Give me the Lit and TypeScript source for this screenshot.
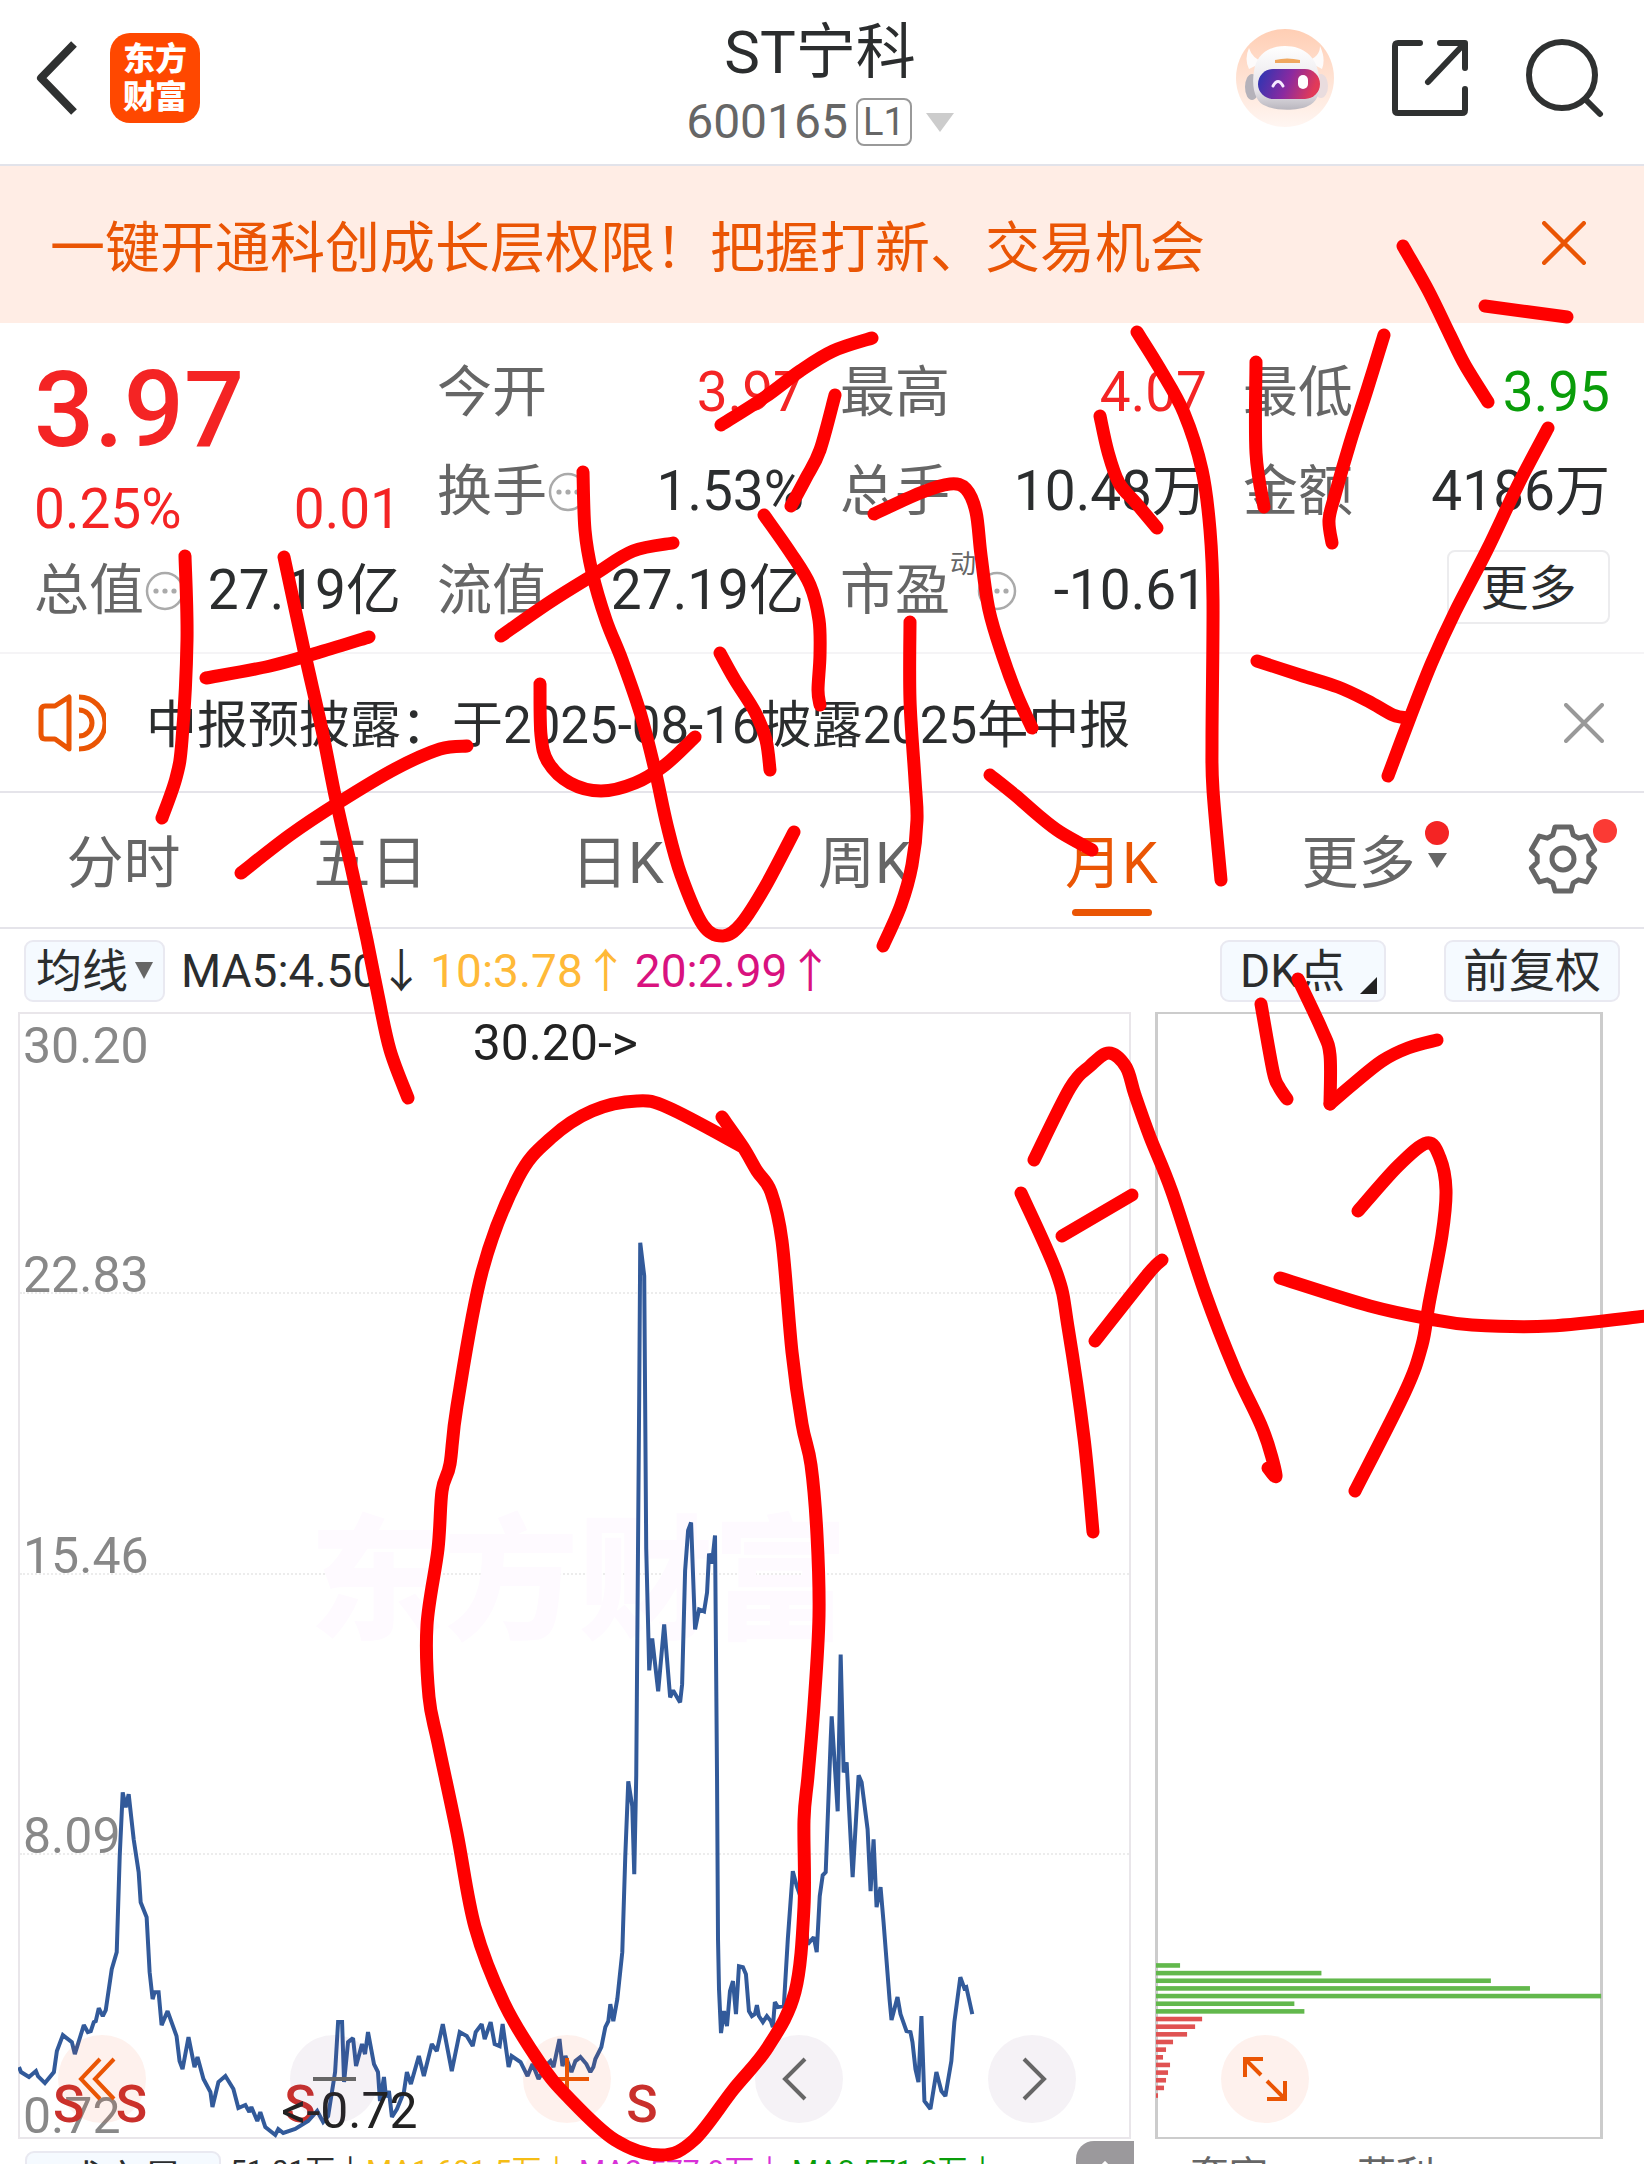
import { LitElement, html, svg, css, nothing } from "lit";
import { customElement, state } from "lit/decorators.js";
import { classMap } from "lit/directives/class-map.js";

type Point = [number, number];

/** Turns a flat "x,y x,y" list into points. */
const parse = (s: string): Point[] =>
  s.trim().split(/\s+/).map((p) => p.split(",").map(Number) as Point);

/** Smooth curve through every point (Catmull-Rom as cubic Béziers). */
const smooth = (s: string): string => {
  const p = parse(s);
  let d = `M${p[0][0]},${p[0][1]}`;
  for (let i = 0; i < p.length - 1; i++) {
    const a = p[i - 1] ?? p[i];
    const b = p[i];
    const c = p[i + 1];
    const e = p[i + 2] ?? c;
    d += `C${b[0] + (c[0] - a[0]) / 6},${b[1] + (c[1] - a[1]) / 6} ${c[0] - (e[0] - b[0]) / 6},${c[1] - (e[1] - b[1]) / 6} ${c[0]},${c[1]}`;
  }
  return d;
};

/** Outline of a six-toothed gear centred on the origin. */
const gearPath = (outer: number, inner: number): string => {
  const pts: string[] = [];
  for (let k = 0; k < 6; k++) {
    for (const [off, r] of [[-23, inner], [-14, outer], [14, outer], [23, inner]]) {
      const t = ((k * 60 + off - 90) * Math.PI) / 180;
      pts.push(`${(r * Math.cos(t)).toFixed(1)},${(r * Math.sin(t)).toFixed(1)}`);
    }
  }
  return `M${pts.join("L")}Z`;
};

const PRICE_LINE = `
19,2068 21,2073 29,2078 36,2072 38,2077 45,2084 54,2073 57,2052 63,2036 72,2043 75,2055 84,2026 88,2033 91,2032
94,2023 96,2022 99,2009 103,2017 106,2011 112,1970 117,1953 120,1857 123,1793 126,1808 129,1795 134,1840 139,1873
141,1903 147,1918 150,1973 153,2000 155,1993 159,1993 162,2026 168,2012 177,2037 180,2062 183,2070 189,2038
195,2068 198,2058 204,2080 211,2093 213,2108 219,2083 226,2077 234,2090 239,2109 246,2106 250,2113 252,2108
258,2122 261,2113 266,2128 276,2136 279,2130 284,2134 296,2130 309,2122 318,2112 324,2123 329,2117 336,2073
339,2023 343,2023 345,2083 349,2043 354,2039 357,2067 363,2045 366,2055 369,2033 375,2065 379,2073 381,2102
385,2078 387,2098 390,2092 393,2118 398,2110 405,2093 408,2073 412,2085 420,2057 425,2077 433,2045 438,2052
444,2025 453,2072 461,2033 468,2037 474,2047 477,2033 483,2025 486,2040 492,2023 496,2045 501,2047 504,2025
510,2068 513,2057 522,2063 529,2077 534,2065 540,2080 549,2065 552,2062 555,2068 561,2040 564,2067 567,2057
573,2073 577,2062 582,2058 588,2065 592,2073 595,2068 597,2060 603,2048 607,2028 610,2022 612,2005 615,2022
619,2000 624,1953 627,1857 630,1782 634,1807 636,1875 638,1776 641,1392 642,1243 646,1276 648,1549 651,1671
654,1639 660,1692 666,1625 672,1698 675,1691 682,1703 684,1685 687,1571 690,1531 693,1523 697,1630 701,1610
706,1612 709,1593 711,1554 714,1564 717,1536 719,1776 720,1940 721,1990 723,2034 726,2012 729,2027 732,1992
735,1982 738,2015 741,1967 745,1968 748,1975 751,2012 754,2017 757,2015 759,2006 761,2017 765,2023 769,2017
773,2022 775,2028 777,2003 780,2008 786,2007 790,1940 795,1872 799,1887 806,1907 810,1945 816,1938 819,1953
822,1897 825,1876 828,1873 833,1740 834,1717 840,1812 843,1655 846,1773 849,1763 855,1878 861,1776 864,1783
870,1830 873,1892 876,1840 879,1908 883,1888 886,1923 892,2000 894,2021 900,1998 903,2015 909,2032 913,2033
915,2043 918,2070 921,2083 924,2017 927,2102 933,2110 939,2073 944,2092 948,2097 954,2062 957,2023 963,1978
967,1989 969,1988 975,2015`;

const INK = [
  "185,556 187,640 182,740 176,778 162,818",
  "206,678 270,666 320,652 369,637",
  "241,873 290,835 338,803 395,769 440,749 467,746",
  "284,557 304,650 322,730 336,800 353,875 367,940 378,995 390,1050 408,1098",
  "583,472 585,530 592,572 606,620 622,660 640,712 655,770 667,825 681,875 703,925 723,936 741,924 765,887 794,832",
  "501,636 550,602 595,574 633,551 673,543",
  "540,684 541,735 548,762 570,783 601,791 635,783 665,765 695,737",
  "720,653 735,680 755,712 766,740 770,770",
  "721,425 765,397 800,371 833,351 872,338",
  "835,395 820,450 806,478 791,506",
  "764,515 790,552 810,585 819,620 820,655 818,690 820,705",
  "874,514 920,493 950,484 966,489 976,512 981,555 989,610 1003,657 1017,695 1032,728",
  "910,622 910,700 915,780 917,820 912,865 901,905 883,946",
  "990,775 1015,795 1038,815 1060,832 1092,850",
  "1100,416 1108,452 1119,483 1136,503 1157,528",
  "1137,332 1160,369 1184,413 1202,470 1210,530 1213,600 1212,740 1213,790 1221,880",
  "1256,362 1256,453 1264,507",
  "1384,335 1367,390 1350,443 1335,495 1329,520 1332,543",
  "1403,246 1428,290 1450,335 1465,365 1488,402",
  "1485,306 1567,317",
  "1548,428 1518,485 1487,550 1455,612 1432,662 1411,715 1388,776",
  "1257,661 1300,675 1338,687 1368,701 1393,715 1409,718",
  "1034,1160 1070,1088 1090,1066 1109,1053 1126,1067 1135,1095 1150,1137 1172,1192 1205,1293 1235,1370 1263,1430 1276,1475 1268,1468",
  "1021,1193 1057,1274 1068,1327 1084,1438 1093,1532",
  "1062,1236 1132,1195",
  "1095,1341 1148,1274 1162,1260",
  "1261,1004 1273,1071 1279,1087 1287,1099",
  "1298,979 1322,1030 1330,1055 1330,1104",
  "1330,1104 1352,1085 1382,1061 1408,1048 1437,1040",
  "1358,1211 1398,1166 1427,1143 1440,1158 1446,1190 1442,1235 1429,1304 1422,1345 1405,1392 1355,1491",
  "1280,1278 1370,1306 1430,1319 1472,1325 1550,1326 1646,1316",
  "722,1117 743,1147 757,1171 771,1192 782,1241 792,1352 802,1424 811,1465 817,1535 819,1616 814,1705 808,1776 804,1820 804,1907 795,1992 768,2047 733,2090 694,2140 661,2155 615,2140 568,2097 540,2063 504,2003 475,1927 457,1833 438,1743 429,1697 427,1625 438,1549 442,1491 450,1464 457,1406 482,1272 518,1178 551,1138 592,1111 637,1101 669,1108 743,1147",
];

const BARS: { length: number; tone: "down" | "up" }[] = [
  ...[24, 165, 334, 373, 444, 138, 148].map((length) => ({ length, tone: "down" as const })),
  ...[46, 39, 31, 17, 10, 7, 14, 12, 10, 8, 2].map((length) => ({ length, tone: "up" as const })),
];

const PERIODS = ["分时", "五日", "日K", "周K", "月K"];

@customElement("app-root")
export class AppRoot extends LitElement {
  @state() private period = "月K";

  static styles = css`
    :host {
      display: block;
      font-family: Roboto, "Noto Sans CJK SC", sans-serif;
      color: #2b2d2e;
      background: #fff;
    }
    * { box-sizing: border-box; }
    button {
      font: inherit;
      color: inherit;
      background: none;
      border: 0;
      padding: 0;
      margin: 0;
      display: flex;
      align-items: center;
      justify-content: center;
      cursor: pointer;
    }
    svg { display: block; flex: none; }
    h1, p, dl, dd, dt { margin: 0; font-weight: 400; }
    .screen {
      position: relative;
      display: flex;
      flex-direction: column;
      height: 100vh;
      overflow: hidden;
      white-space: nowrap;
    }

    .header {
      display: grid;
      grid-template-columns: 1fr auto 1fr;
      align-items: center;
      flex: none;
      height: 166px;
      padding: 0 40px 8px 36px;
      border-bottom: 2px solid #e2e3ea;
    }
    .lead, .actions { display: flex; align-items: center; }
    .lead { gap: 32px; }
    .actions { gap: 58px; justify-content: flex-end; }
    .logo {
      width: 90px;
      height: 90px;
      border-radius: 20px;
      background: #ff4800;
      color: #fff;
      font-size: 32px;
      line-height: 38px;
      font-weight: 900;
      flex-direction: column;
    }
    .title { align-self: end; text-align: center; }
    .name { font-size: 60px; line-height: 70px; }
    .code {
      display: flex;
      align-items: center;
      justify-content: center;
      gap: 8px;
      font-size: 48px;
      line-height: 68px;
      color: #666;
    }
    .level {
      border: 2px solid #999;
      border-radius: 8px;
      font-size: 38px;
      line-height: 44px;
      padding: 0 5px;
    }
    .code svg { margin-left: 6px; }

    .banner {
      display: flex;
      align-items: center;
      justify-content: space-between;
      flex: none;
      height: 157px;
      padding: 0 58px 4px 50px;
      background: #ffede5;
      color: #ea5504;
      font-size: 55px;
    }

    .quote {
      display: grid;
      grid-template-columns: repeat(4, 1fr);
      grid-auto-rows: 99px;
      column-gap: 36px;
      flex: none;
      padding: 20px 34px 12px;
      border-bottom: 2px solid #f5f4f6;
      font-size: 55px;
    }
    .last { grid-row: span 2; color: #f42424; }
    .price { font-size: 106px; font-weight: 500; line-height: 134px; }
    .change { display: flex; justify-content: space-between; line-height: 64px; }
    .item { display: flex; justify-content: space-between; align-items: center; line-height: 99px; }
    .item dt { color: #666; display: flex; align-items: center; }
    .item dt svg { margin-left: 1px; }
    .item sup { font-size: 26px; line-height: 26px; align-self: flex-start; margin-top: 10px; }
    .up { color: #f42424; }
    .down { color: #0a9d0a; }
    .more {
      justify-self: end;
      align-self: center;
      width: 163px;
      height: 74px;
      margin-bottom: 8px;
      padding-bottom: 6px;
      border: 2px solid #ececee;
      border-radius: 8px;
      font-size: 48px;
    }

    .notice {
      display: flex;
      align-items: center;
      flex: none;
      height: 139px;
      padding: 0 40px 0 38px;
      border-bottom: 2px solid #e5e4ea;
      font-size: 51px;
    }
    .notice p { flex: 1; padding: 0 0 4px 40px; }

    .tabs {
      display: grid;
      grid-template-columns: repeat(6, 247fr) 162fr;
      flex: none;
      height: 136px;
      border-bottom: 2px solid #e5e4ea;
      font-size: 57px;
      color: #666;
    }
    .tab { position: relative; padding-bottom: 4px; }
    .tab.active { color: #ea5504; }
    .tab.active::after {
      content: "";
      position: absolute;
      bottom: 11px;
      left: 50%;
      width: 80px;
      margin-left: -40px;
      height: 7px;
      border-radius: 4px;
      background: #ea5504;
    }
    .badge { position: absolute; top: 26px; left: 50%; margin-left: 66px; }

    .tools {
      display: flex;
      align-items: center;
      flex: none;
      height: 83px;
      padding: 0 24px;
      font-size: 46px;
      line-height: 58px;
    }
    .chip {
      height: 62px;
      border: 2px solid #e9e9f1;
      border-radius: 9px;
      background: #f5faff;
      padding: 0 17px;
      flex: none;
    }
    .pick { gap: 7px; padding: 0 10px; }
    .averages { display: flex; gap: 6px; flex: 1; padding-left: 16px; }
    .ma10 { color: #ffb938; }
    .ma20 { color: #d9127f; }
    .dk { margin-right: 58px; padding: 0 7px 0 18px; gap: 15px; }
    .dk svg { align-self: flex-end; margin-bottom: 6px; }

    .charts {
      position: relative;
      display: flex;
      flex: 1;
      min-height: 0;
      gap: 24px;
      padding: 0 41px 0 18px;
    }
    .main { position: relative; flex: 1116; border: 2px solid #e9e6ea; display: flex; flex-direction: column; }
    .side { flex: 445; border: 3px solid #ccc; border-top-width: 2px; border-bottom-width: 2px; position: relative; }
    .band {
      flex: 1;
      display: flex;
      flex-direction: column;
      justify-content: space-between;
      border-bottom: 2px dotted #ececec;
      padding-left: 3px;
      font-size: 50px;
      line-height: 34px;
      color: #888;
    }
    .band:last-of-type { border-bottom: 0; padding-bottom: 4px; }
    .band:first-of-type span:first-child { line-height: 66px; margin-bottom: auto; margin-top: -1px; }
    .band span:only-child { margin-top: auto; }
    .plot, .profile, .ink { position: absolute; pointer-events: none; }
    .plot, .profile { inset: -2px; width: calc(100% + 4px); height: calc(100% + 4px); }
    .profile { left: -3px; right: -3px; width: calc(100% + 6px); }
    .ink { inset: 0; width: 100%; height: 100%; }
    .mark { font-size: 52px; font-weight: 500; fill: #c9302c; }
    .peak { font-size: 50px; fill: #222; }
    .watermark { font-size: 135px; font-weight: 900; fill: #fefaff; }

    .floating {
      position: absolute;
      left: 3.5%;
      right: 20.4%;
      bottom: 16px;
      display: flex;
      justify-content: space-between;
    }
    .round { width: 88px; height: 88px; border-radius: 50%; background: rgba(240, 80, 30, 0.08); }
    .round.plain { background: rgba(110, 70, 130, 0.07); }

    .volume {
      display: flex;
      flex: none;
      height: 25px;
      padding: 0 0 0 25px;
      align-items: flex-start;
      overflow: hidden;
      font-size: 30px;
      line-height: 42px;
    }
    .volume .chip { width: 196px; height: 60px; margin-top: 12px; font-size: 40px; line-height: 48px; }
    .volume span { margin-top: 11px; width: 213px; flex: none; }
    .volume .now { width: 145px; padding-left: 9px; }
    .v1 { color: #f5bd15; }
    .v2 { color: #d830d8; }
    .v3 { color: #0a9d0a; }
    .corner { width: 58px; height: 60px; margin-top: 2px; margin-left: 71px; border-radius: 18px 0 0 0; background: #9b999c; flex: none; align-items: flex-start; }
    .corner svg { margin-top: 20px; }
    .volume .legend { font-size: 39px; line-height: 50px; color: #666; width: 167px; margin-top: 12px; }
    .volume .legend.first { margin-left: 56px; }
  `;

  private cross(size: number, width: number, color: string) {
    return html`<svg width=${size} height=${size} viewBox="0 0 40 40" aria-hidden="true">
      <path d="M2 2L38 38M38 2L2 38" fill="none" stroke=${color} stroke-width=${width} stroke-linecap="round" />
    </svg>`;
  }

  private caret(width: number, height: number, color: string) {
    return html`<svg width=${width} height=${height} viewBox="0 0 20 16" preserveAspectRatio="none" aria-hidden="true">
      <path d="M0 0H20L10 16Z" fill=${color} />
    </svg>`;
  }

  private hint() {
    return html`<svg width="40" height="40" viewBox="0 0 40 40" aria-hidden="true">
      <circle cx="20" cy="20" r="18" fill="none" stroke="#aaa" stroke-width="2.5" />
      <circle cx="11" cy="20" r="2.6" fill="#aaa" /><circle cx="20" cy="20" r="2.6" fill="#aaa" /><circle cx="29" cy="20" r="2.6" fill="#aaa" />
    </svg>`;
  }

  private item(label: string, value: string, tone = "", hint = false, sup = "") {
    return html`<div class="item">
      <dt>${label}${sup ? html`<sup>${sup}</sup>` : nothing}${hint ? this.hint() : nothing}</dt>
      <dd class=${tone}>${value}</dd>
    </div>`;
  }

  private header() {
    return html`<header class="header">
      <div class="lead">
        <button aria-label="返回">
          <svg width="42" height="74" viewBox="0 0 42 74">
            <path d="M38 3L5 37L38 71" fill="none" stroke="#2f3131" stroke-width="8" stroke-linejoin="round" />
          </svg>
        </button>
        <button class="logo"><span>东方</span><span>财富</span></button>
      </div>
      <div class="title">
        <h1 class="name">ST宁科</h1>
        <p class="code">600165<span class="level">L1</span>${this.caret(28, 19, "#ccc")}</p>
      </div>
      <div class="actions">
        <button aria-label="智能助手">
          <svg width="98" height="98" viewBox="0 0 98 98">
            <defs>
              <linearGradient id="halo" x1="0" y1="0" x2="0" y2="1"><stop offset="0" stop-color="#ffceb4" /><stop offset="1" stop-color="#fff6f2" /></linearGradient>
              <linearGradient id="visor" x1="0" y1="0" x2="1" y2="0.2"><stop offset="0" stop-color="#2636b4" /><stop offset="0.55" stop-color="#8a2aa0" /><stop offset="1" stop-color="#e23a58" /></linearGradient>
              <linearGradient id="shell" x1="0" y1="0" x2="0" y2="1"><stop offset="0" stop-color="#fff" /><stop offset="0.7" stop-color="#e6e3e8" /><stop offset="1" stop-color="#b9b6be" /></linearGradient>
            </defs>
            <circle cx="49" cy="49" r="49" fill="url(#halo)" />
            <path d="M13 19Q8 30 13 40L27 33Q16 29 13 19ZM84 17Q90 30 86 40L71 32Q84 28 84 17Z" fill="#fdfbfb" />
            <ellipse cx="16" cy="58" rx="7" ry="13" fill="#b5b2ba" />
            <ellipse cx="85" cy="57" rx="7" ry="12" fill="#e9dcde" />
            <path d="M49 17C30 17 20 28 18 42C15 60 20 74 30 77C40 82 62 82 72 77C84 72 86 56 82 42C79 28 68 17 49 17Z" fill="url(#shell)" />
            <path d="M39 31Q51 28 64 31V34H39Z" fill="#f0a860" />
            <rect x="22" y="40" width="62" height="30" rx="15" fill="url(#visor)" />
            <path d="M37 57Q42 48 47 57" fill="none" stroke="#f5e9ff" stroke-width="3" stroke-linecap="round" />
            <rect x="62" y="46" width="10" height="14" rx="5" fill="#fff" />
          </svg>
        </button>
        <button aria-label="分享">
          <svg width="76" height="78" viewBox="0 0 76 78">
            <path d="M28 4H6Q3 4 3 7V71Q3 74 6 74H70Q73 74 73 71V50M48 4H73V29M71 6L36 43" fill="none" stroke="#2f3131" stroke-width="6" stroke-linecap="round" stroke-linejoin="round" />
          </svg>
        </button>
        <button aria-label="搜索">
          <svg width="78" height="80" viewBox="0 0 78 80">
            <circle cx="36" cy="37" r="33" fill="none" stroke="#2f3131" stroke-width="6" />
            <path d="M60 62L74 76" stroke="#2f3131" stroke-width="6" stroke-linecap="round" />
          </svg>
        </button>
      </div>
    </header>`;
  }

  private quote() {
    return html`<dl class="quote">
      <div class="last">
        <dd class="price">3.97</dd>
        <dd class="change"><span>0.25%</span><span>0.01</span></dd>
      </div>
      ${this.item("今开", "3.97", "up")} ${this.item("最高", "4.07", "up")} ${this.item("最低", "3.95", "down")}
      ${this.item("换手", "1.53%", "", true)} ${this.item("总手", "10.48万")} ${this.item("金额", "4186万")}
      ${this.item("总值", "27.19亿", "", true)} ${this.item("流值", "27.19亿")} ${this.item("市盈", "-10.61", "", true, "动")}
      <button class="more">更多</button>
    </dl>`;
  }

  private tabs() {
    return html`<nav class="tabs">
      ${PERIODS.map(
        (p) => html`<button class=${classMap({ tab: true, active: p === this.period })} @click=${() => (this.period = p)}>${p}</button>`,
      )}
      <button class="tab">更多<svg class="badge" width="24" height="62" viewBox="0 0 24 62" aria-hidden="true">
          <circle cx="12" cy="14" r="12" fill="#f42424" /><path d="M3 34H22L12 49Z" fill="#666" />
        </svg></button>
      <button class="tab" aria-label="设置">
        <svg width="110" height="80" viewBox="-55 -41 110 80">
          <path d=${gearPath(33, 26)} fill="none" stroke="#666" stroke-width="5" stroke-linejoin="round" />
          <circle r="11" fill="none" stroke="#666" stroke-width="5" />
          <circle cx="42" cy="-28" r="12" fill="#fb3a34" />
        </svg>
      </button>
    </nav>`;
  }

  private tools() {
    return html`<div class="tools">
      <button class="chip pick">均线${this.caret(18, 17, "#666")}</button>
      <div class="averages">
        <span>MA5:4.50↓</span><span class="ma10">10:3.78↑</span><span class="ma20">20:2.99↑</span>
      </div>
      <button class="chip dk">DK点<svg width="17" height="17" viewBox="0 0 16 16" aria-hidden="true"><path d="M16 0V16H0Z" fill="#222" /></svg></button>
      <button class="chip">前复权</button>
    </div>`;
  }

  private round(label: string, path: string, plain: boolean) {
    return html`<button class=${classMap({ round: true, plain })} aria-label=${label}>
      <svg width="48" height="48" viewBox="0 0 48 48">
        <path d=${path} fill="none" stroke=${plain ? "#666" : "#ea5504"} stroke-width="4" />
      </svg>
    </button>`;
  }

  private charts() {
    return html`<section class="charts">
      <div class="main">
        <svg class="plot" viewBox="18 1012 1116 1128" preserveAspectRatio="none" aria-hidden="true">
          <text class="watermark" x="310" y="1630">东方财富</text>
        </svg>
        <div class="band"><span>30.20</span><span>22.83</span></div>
        <div class="band"><span>15.46</span></div>
        <div class="band"><span>8.09</span></div>
        <div class="band"><span>0.72</span></div>
        <svg class="plot" viewBox="18 1012 1116 1128" preserveAspectRatio="none">
          ${[53, 116, 285, 628].map((x) => svg`<text class="mark" x=${x} y="2123">S</text>`)}
          <polyline points=${PRICE_LINE.trim()} fill="none" stroke="#325a9a" stroke-width="4" stroke-linejoin="miter" stroke-miterlimit="2" />
          <text class="peak" x="474" y="1060">30.20-&gt;</text>
          <text class="peak" x="282" y="2129">&lt;-0.72</text>
        </svg>
      </div>
      <div class="side">
        <svg class="profile" viewBox="1157 1012 447 1128" preserveAspectRatio="none">
          ${BARS.map(
            (b, i) => svg`<rect x="1158" y=${1964 + i * 7.66} width=${b.length} height="4.6" fill=${b.tone === "down" ? "#62b84c" : "#e05252"} />`,
          )}
        </svg>
      </div>
      <div class="floating">
        ${this.round("最早", "M22 4L3 24L22 44M36 4L17 24L36 44", false)}
        ${this.round("缩小", "M3 24H46", true)}
        ${this.round("放大", "M3 24H46M24 3V46", false)}
        ${this.round("向左", "M30 4L10 24L30 44", true)}
        ${this.round("向右", "M16 4L36 24L16 44", true)}
        ${this.round("全屏", "M4 22V4H22M5 5L20 20M26 26L42 42M44 26V44H26", false)}
      </div>
    </section>`;
  }

  private volume() {
    return html`<section class="volume">
      <button class="chip">成交量</button>
      <span class="now">51.01万↓</span>
      <span class="v1">MA1:601.5万↓</span>
      <span class="v2">MA2:577.9万↓</span>
      <span class="v3">MA3:571.2万↓</span>
      <button class="corner" aria-label="展开">
        <svg width="22" height="12" viewBox="0 0 22 12"><path d="M2 11L11 2L20 11" fill="none" stroke="#fff" stroke-width="3" /></svg>
      </button>
      <span class="legend first">套牢</span><span class="legend">获利</span>
    </section>`;
  }

  render() {
    return html`<main class="screen">
      ${this.header()}
      <div class="banner">
        <span>一键开通科创成长层权限！把握打新、交易机会</span>
        <button aria-label="关闭">${this.cross(44, 4, "#ea5504")}</button>
      </div>
      ${this.quote()}
      <div class="notice">
        <svg width="68" height="60" viewBox="0 0 68 60" aria-hidden="true">
          <path d="M31 4V56L17 46H7Q3 46 3 41V18Q3 13 7 13H17ZM41 17A13 13 0 0 1 41 43M41 4A26 26 0 0 1 41 56" fill="none" stroke="#ea5504" stroke-width="5" stroke-linejoin="round" />
        </svg>
        <p>中报预披露：于2025-08-16披露2025年中报</p>
        <button aria-label="关闭公告">${this.cross(40, 4, "#999")}</button>
      </div>
      ${this.tabs()} ${this.tools()} ${this.charts()} ${this.volume()}
      <svg class="ink" viewBox="0 0 1644 2164" preserveAspectRatio="none" aria-hidden="true">
        ${INK.map((s) => svg`<path d=${smooth(s)} fill="none" stroke="#ff0000" stroke-width="13" stroke-linecap="round" stroke-linejoin="round" />`)}
      </svg>
    </main>`;
  }
}
